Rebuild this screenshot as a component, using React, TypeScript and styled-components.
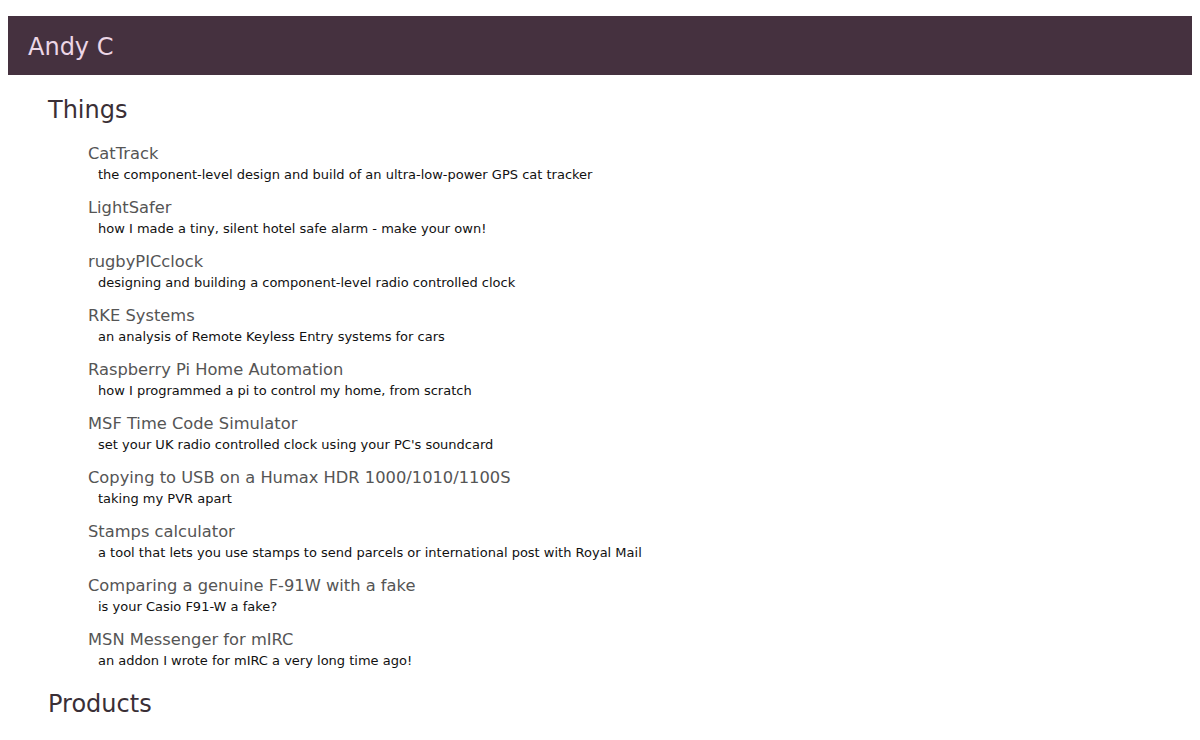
import React from 'react'
import styled, { createGlobalStyle } from 'styled-components'

const things = [
    { name: 'CatTrack', about: 'the component-level design and build of an ultra-low-power GPS cat tracker' },
    { name: 'LightSafer', about: 'how I made a tiny, silent hotel safe alarm - make your own!' },
    { name: 'rugbyPICclock', about: 'designing and building a component-level radio controlled clock' },
    { name: 'RKE Systems', about: 'an analysis of Remote Keyless Entry systems for cars' },
    { name: 'Raspberry Pi Home Automation', about: 'how I programmed a pi to control my home, from scratch' },
    { name: 'MSF Time Code Simulator', about: "set your UK radio controlled clock using your PC's soundcard" },
    { name: 'Copying to USB on a Humax HDR 1000/1010/1100S', about: 'taking my PVR apart' },
    { name: 'Stamps calculator', about: 'a tool that lets you use stamps to send parcels or international post with Royal Mail' },
    { name: 'Comparing a genuine F-91W with a fake', about: 'is your Casio F91-W a fake?' },
    { name: 'MSN Messenger for mIRC', about: 'an addon I wrote for mIRC a very long time ago!' },
]

export default function App() {
    return (
        <>
            <GlobalStyle />
            <Header>
                <SiteName>Andy C</SiteName>
            </Header>
            <Content>
                <SectionTitle>Things</SectionTitle>
                <ThingList>
                    {things.map((thing, key) => (
                        <Thing key={key}>
                            <ThingName href="#">{thing.name}</ThingName>
                            <ThingAbout>{thing.about}</ThingAbout>
                        </Thing>
                    ))}
                </ThingList>
                <SectionTitle>Products</SectionTitle>
            </Content>
        </>
    )
}

const GlobalStyle = createGlobalStyle`
    body {
        margin: 8px;
        padding-top: 8px;
        background: white;
        font-family: Tahoma, "DejaVu Sans", Verdana, sans-serif;
    }
`

const Header = styled.div`
    background: #45313f;
    height: 59px;
    display: flex;
    align-items: center;
    padding-left: 20px;
`

const SiteName = styled.div`
    color: #ecd6e6;
    font-size: 24px;
    padding-top: 3px;
`

const Content = styled.div`
    padding-left: 40px;
`

const SectionTitle = styled.div`
    font-size: 24px;
    color: #3a2f36;
    margin-top: 21px;
`

const ThingList = styled.div`
    display: flex;
    flex-direction: column;
    padding-left: 40px;
    padding-top: 19px;
    gap: 12px;
    margin-bottom: -2px;
`

const Thing = styled.div`
    display: flex;
    flex-direction: column;
`

const ThingName = styled.a`
    color: #555;
    font-size: 16.3px;
    text-decoration: none;
    line-height: 22px;
`

const ThingAbout = styled.div`
    color: #111;
    font-size: 13px;
    padding-left: 10px;
    line-height: 20px;
`
